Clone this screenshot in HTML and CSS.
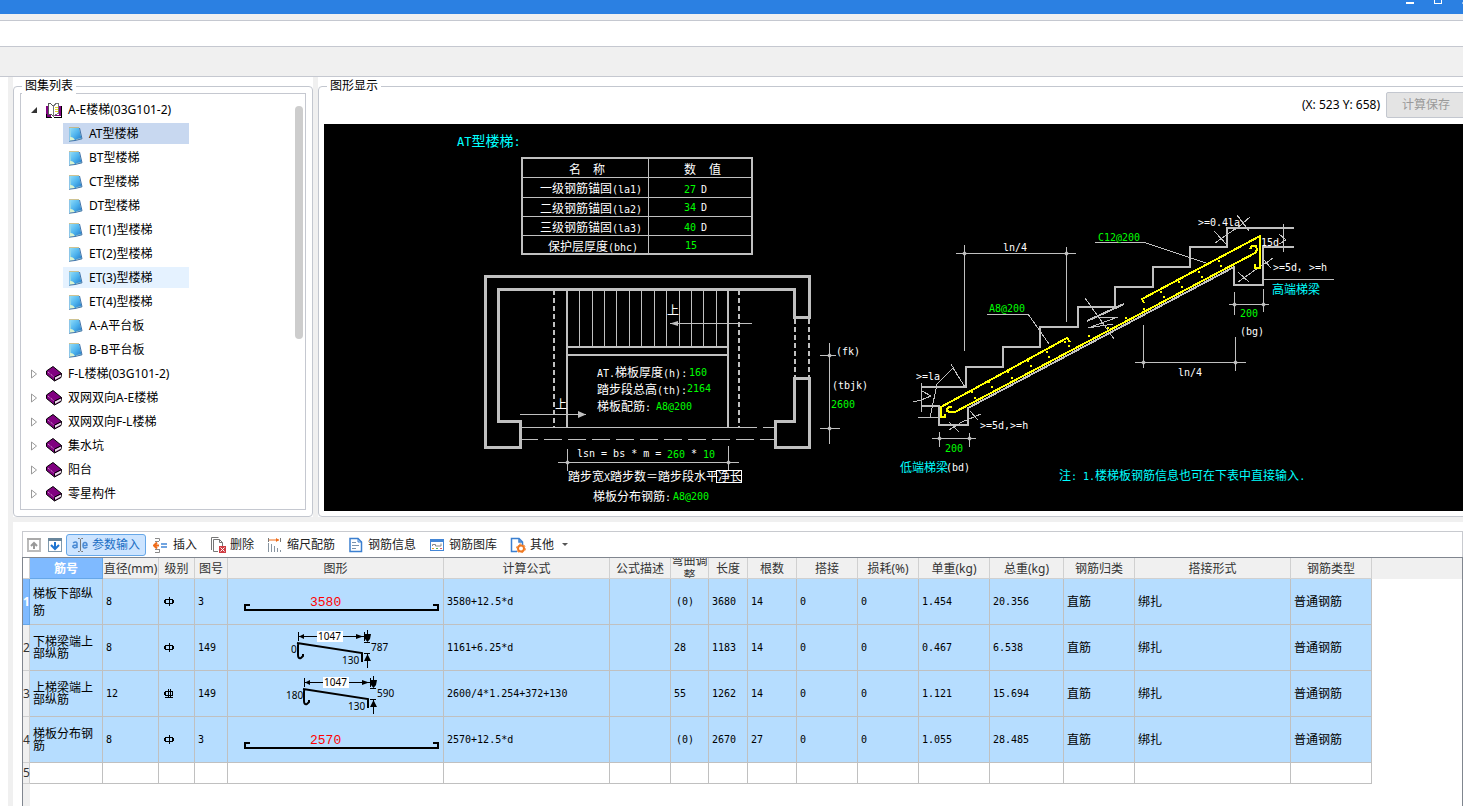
FILE: index.html
```html
<!DOCTYPE html>
<html lang="zh-CN">
<head>
<meta charset="utf-8">
<title>楼梯参数输入</title>
<link rel="stylesheet" href="styles.css">
</head>
<body>
<svg class="defs" aria-hidden="true">
  <defs>
    <linearGradient id="pageBlue" x1="0" y1="0" x2="1" y2="1">
      <stop offset="0" stop-color="#8fdcf8"/><stop offset=".5" stop-color="#4fb4ee"/><stop offset="1" stop-color="#1f78c8"/>
    </linearGradient>
    <symbol id="note" viewBox="0 0 16 16">
      <path d="M1 1.500H11L14 13L10 14L1 15.500Z" fill="#d9f3d0"/>
      <path d="M2 2H11L13.500 12.500Q9 12 7 14.500Q6 11 2.500 11Z" fill="url(#pageBlue)"/>
      <path d="M1 15.200L7 14.500L14 12.800L11.500 2" fill="none" stroke="#3f72ac"/>
      <path d="M1.500 1.500H11.500" stroke="#b08d3c" stroke-dasharray="1 1"/>
      <path d="M1.500 2V15" stroke="#8cc6e8"/>
    </symbol>
    <symbol id="book" viewBox="0 0 16 16">
      <path d="M7 .5L15.500 7.500L15 11.500L8.500 15L.5 8.500V5Z" fill="#800080" stroke="#000"/>
      <path d="M9 11.500L15 8.500V10.500L9 13.800Z" fill="#e8e8e8"/>
      <path d="M8.500 11L15.500 7.500M8.500 14.500V11.500" stroke="#000"/>
      <path d="M2 6L8 11" stroke="#e6b8e6" stroke-dasharray="1 1"/>
    </symbol>
    <symbol id="open" viewBox="0 0 16 16" shape-rendering="crispEdges">
      <path d="M0 4H2V12H5V15H0ZM6 13H13V4H15V14H6Z" fill="#800080"/>
      <path d="M2.500 12V2L4 1L7 4V14L4.500 12Z" fill="#fff" stroke="#555"/>
      <path d="M7.500 14V4L10 1.500H12.500V11.500L9.500 12.500Z" fill="#fff" stroke="#777"/>
      <path d="M9 5H12M9 7H12M9 9H12" stroke="#e8d820" stroke-width="1"/>
      <path d="M0 12V15H5V16H8V15H15V4" fill="none" stroke="#000"/>
    </symbol>
    <symbol id="closed" viewBox="0 0 6 10"><path d="M.5 1V9L5.500 5Z" fill="#fff" stroke="#999"/></symbol>
    <symbol id="expanded" viewBox="0 0 6 10"><path d="M0 8H6V2Z" fill="#333"/></symbol>
    <symbol id="grade1" viewBox="0 0 10 10" shape-rendering="crispEdges"><path d="M1.500 2.500H8.500V6.500H1.500ZM5 0V9" fill="none" stroke="#000"/><path d="M.5 3V6M9.500 3V6" stroke="#000"/></symbol>
    <symbol id="grade2" viewBox="0 0 10 10" shape-rendering="crispEdges"><path d="M1.500 2.500H8.500V6.500H1.500ZM4.500 0V9M6.500 0V9M1 8.500H9M.5 3V6" fill="none" stroke="#000"/></symbol>
    <symbol id="bar" viewBox="0 0 215 45">
      <path d="M22 26H17V31H210V26H205" fill="none" stroke="#000" stroke-width="2" shape-rendering="crispEdges"/>
    </symbol>
    <symbol id="bent" viewBox="0 0 215 45">
      <path d="M72 18V30Q72 34 75 33L77 31V29M71 18L136 28V37" transform="translate(-2 0)" fill="none" stroke="#000" stroke-width="2"/>
      <g stroke="#000" fill="none" shape-rendering="crispEdges">
        <path d="M70.500 7V16M70 11.500H139M136.500 7V16M139.500 5V16M136 17.500H142M136 28.500H142M139.500 29V43"/>
      </g>
      <path d="M71 11.500L76 9V14ZM135 11.500L128 9V14ZM137 9H143L142 14L139.500 17L137 14ZM139.500 29L143 36H136Z"/>
      <rect x="89" y="6" width="26" height="11" fill="#fff"/>
    </symbol>
  </defs>
</svg>

<header class="titlebar">
  <button class="win" aria-label="最小化"><svg width="8" height="10"><path d="M0 9H8" stroke="#fff" stroke-width="2"/></svg></button>
  <button class="win" aria-label="最大化"><svg width="8" height="10"><rect x=".5" y="2.500" width="7" height="7" fill="none" stroke="#fff"/></svg></button>
  <button class="win" aria-label="关闭"><svg width="8" height="10"><path d="M0 9.500L8 2M0 2L8 9.500" stroke="#fff"/></svg></button>
</header>
<div class="strip"></div>
<div class="band"></div>
<div class="ribbon"></div>

<main class="work">
  <div class="upper">
    <div class="pane">
      <section class="group">
        <h2 class="caption">图集列表</h2>
        <div class="treebox">
          <ul class="tree">
            <li><button class="node"><svg class="twisty"><use href="#expanded"/></svg><svg class="ico"><use href="#open"/></svg>A-E楼梯(03G101-2)</button></li>
            <li><button class="leaf selected"><svg class="ico"><use href="#note"/></svg>AT型楼梯</button></li>
            <li><button class="leaf"><svg class="ico"><use href="#note"/></svg>BT型楼梯</button></li>
            <li><button class="leaf"><svg class="ico"><use href="#note"/></svg>CT型楼梯</button></li>
            <li><button class="leaf"><svg class="ico"><use href="#note"/></svg>DT型楼梯</button></li>
            <li><button class="leaf"><svg class="ico"><use href="#note"/></svg>ET(1)型楼梯</button></li>
            <li><button class="leaf"><svg class="ico"><use href="#note"/></svg>ET(2)型楼梯</button></li>
            <li><button class="leaf hover"><svg class="ico"><use href="#note"/></svg>ET(3)型楼梯</button></li>
            <li><button class="leaf"><svg class="ico"><use href="#note"/></svg>ET(4)型楼梯</button></li>
            <li><button class="leaf"><svg class="ico"><use href="#note"/></svg>A-A平台板</button></li>
            <li><button class="leaf"><svg class="ico"><use href="#note"/></svg>B-B平台板</button></li>
            <li><button class="node"><svg class="twisty"><use href="#closed"/></svg><svg class="ico"><use href="#book"/></svg>F-L楼梯(03G101-2)</button></li>
            <li><button class="node"><svg class="twisty"><use href="#closed"/></svg><svg class="ico"><use href="#book"/></svg>双网双向A-E楼梯</button></li>
            <li><button class="node"><svg class="twisty"><use href="#closed"/></svg><svg class="ico"><use href="#book"/></svg>双网双向F-L楼梯</button></li>
            <li><button class="node"><svg class="twisty"><use href="#closed"/></svg><svg class="ico"><use href="#book"/></svg>集水坑</button></li>
            <li><button class="node"><svg class="twisty"><use href="#closed"/></svg><svg class="ico"><use href="#book"/></svg>阳台</button></li>
            <li><button class="node"><svg class="twisty"><use href="#closed"/></svg><svg class="ico"><use href="#book"/></svg>零星构件</button></li>
          </ul>
          <div class="thumb"></div>
        </div>
      </section>
    </div>

    <div class="pane wide">
      <section class="group">
        <h2 class="caption">图形显示</h2>
        <div class="viewhead">
          <span>(X: 523 Y: 658)</span>
          <button class="save" disabled>计算保存</button>
        </div>
        <svg class="cad" viewBox="324 124 1142 387" role="img" aria-label="AT型楼梯">
          <g class="ln" shape-rendering="crispEdges">
            <!-- parameter table -->
            <path class="w2" d="M522 158H752V254H522Z"/>
            <path d="M648.500 158V254M522 177.500H752M522 197.500H752M522 216.500H752M522 235.500H752"/>
            <!-- plan walls -->
            <path class="w3" d="M794.500 317.500V289.500H498.500V421.500H520.500V447.500H485.500V276.500H809.500V317.500H793"/>
            <path class="w3" d="M794.500 377V421.500H775.500V447.500H809.500V378.500H793"/>
            <path class="w2" stroke-dasharray="5 3" d="M554 290V427M739 290V427M795 319V377M809 319V377"/>
            <path class="w2" d="M567 290V427M728 290V427M567 347H728M567 355H728"/>
            <path d="M579.500 290V346M592.500 290V346M604.500 290V346M616.500 290V346M629.500 290V346M641.500 290V346M654.500 290V346M666.500 290V346M679.500 290V346M691.500 290V346M703.500 290V346M716.500 290V346"/>
            <path d="M752 323.500H670M520 414.500H586M522 427.500H757M763 427.500H774"/>
            <path stroke-dasharray="18 6" d="M520 439.500H774"/>
            <path d="M567.500 449V471M728.500 446V471M558 462.500H739M829.500 343V444M820 355.500H836M820 428.500H840"/>
            <!-- section dimensions -->
            <path d="M956 253.500H1076M964.500 245V351M1066.500 247V322M987 314.500H1028M1095 242.500H1143M921.500 383V412M918 417.500H939"/>
            <path d="M932 438.500H976M939.500 432V447M969.500 433V447M1229 304.500H1269M1234.500 292V315M1263.500 289V312M1263 279.500H1334M1135 362.500H1246M1143.500 325V368M1235.500 337V371M1283.500 224V252"/>
            <!-- stair outline -->
            <path class="w2" d="M922 387H966V367H1003V347H1040V327H1078V307H1115V287H1153V267H1190V247H1227V228H1294M1294 247H1263V285H1234V267L968 408V425H939V406H922"/>
            <path class="w2" d="M1087 321L1124 304"/>
            <path d="M1028 314L1049 344M1143 242L1206 263M1085 298L1114 339M1098 317L1118 317L1088 328L1113 324"/>
            <path d="M922 391L931 396L921 400L913 402M930 418L937 384L953 368L965 387M951 364L957 374M949 422L959 432M949 430L962 422L981 414M970 411L978 420"/>
            <path d="M1237 215L1249 231M1235 230L1250 217M1214 231L1228 246M1215 243L1235 229M1279 234L1286 240L1279 244M1263 259L1271 268M1265 264L1273 258M1238 272L1249 282M1238 282L1265 263"/>
          </g>
          <path class="solid" d="M670 323.500L678 321V326ZM586 414.500L578 411V418ZM565 462.500L567.500 460L570 462.500L567.500 465ZM726 462.500L728.500 460L731 462.500L728.500 465Z"/>
          <path class="solid" d="M827 355.500L829.500 353L832 355.500L829.500 358ZM827 428.500L829.500 426L832 428.500L829.500 431ZM962 253.500L964.500 251L967 253.500L964.500 256ZM1064 253.500L1066.500 251L1069 253.500L1066.500 256ZM937 438.500L939.500 436L942 438.500L939.500 441ZM967 438.500L969.500 436L972 438.500L969.500 441ZM1232 304.500L1234.500 302L1237 304.500L1234.500 307ZM1261 304.500L1263.500 302L1266 304.500L1263.500 307ZM1141 362.500L1143.500 360L1146 362.500L1143.500 365ZM1233 362.500L1235.500 360L1238 362.500L1235.500 365Z"/>
          <g class="rebar" shape-rendering="crispEdges">
            <path d="M945 414V417H941V407L1067 338L1070 342"/>
            <path d="M952 407H949L947 409V411L950 412H955L1255 253L1257 250L1256 246H1252L1250 249"/>
            <path d="M1144 303L1142 299L1260 236V268H1255V264"/>
            <path class="dots" d="M972 392h0M975 398h0M989 382h0M992 387h0M1008 372h0M1012 378h0M1028 361h0M1031 366h0M1047 352h0M1049 357h0M1065 342h0M1069 346h0M1089 336h0M1108 328h0M1126 318h0M1144 309h0M1161 292h0M1164 297h0M1179 282h0M1182 287h0M1199 272h0M1202 277h0M1219 261h0M1221 266h0"/>
          </g>
          <rect x="716.500" y="470.500" width="25" height="12" fill="none" stroke="#fff"/>
          <g class="cy">
            <text x="457" y="146" class="t14"><tspan class="l12">AT</tspan>型楼梯<tspan class="l12">:</tspan></text>
            <text x="1272" y="294" class="c">高端梯梁</text>
            <text x="900" y="472" class="c">低端梯梁</text>
            <text x="1059" y="480" class="c">注<tspan class="l">: 1.</tspan>楼梯板钢筋信息也可在下表中直接输入<tspan class="l">.</tspan></text>
          </g>
          <g class="wh">
            <text y="174" class="c"><tspan x="569">名</tspan><tspan x="593">称</tspan></text>
            <text y="174" class="c"><tspan x="684">数</tspan><tspan x="709">值</tspan></text>
            <text x="540" y="193" class="c">一级钢筋锚固<tspan class="l">(la1)</tspan></text>
            <text x="540" y="213" class="c">二级钢筋锚固<tspan class="l">(la2)</tspan></text>
            <text x="540" y="232" class="c">三级钢筋锚固<tspan class="l">(la3)</tspan></text>
            <text x="548" y="251" class="c">保护层厚度<tspan class="l">(bhc)</tspan></text>
            <text x="701" y="193">D</text><text x="701" y="211">D</text><text x="701" y="231">D</text>
            <text x="667" y="315" class="c">上</text><text x="555" y="409" class="c">上</text>
            <text x="597" y="377" class="c"><tspan class="l">AT.</tspan>梯板厚度<tspan class="l">(h):</tspan></text>
            <text x="597" y="394" class="c">踏步段总高<tspan class="l">(th):</tspan></text>
            <text x="597" y="411" class="c">梯板配筋<tspan class="l">:</tspan></text>
            <text x="577" y="457">lsn = bs * m =</text><text x="691" y="457">*</text>
            <text x="568" y="481" class="c">踏步宽<tspan class="l">X</tspan>踏步数＝踏步段水平净长</text>
            <text x="593" y="501" class="c">梯板分布钢筋<tspan class="l">:</tspan></text>
            <text x="836" y="355">(fk)</text><text x="832" y="389">(tbjk)</text>
            <text x="1003" y="251">ln/4</text><text x="1178" y="376">ln/4</text>
            <text x="916" y="380">&gt;=la</text><text x="980" y="429">&gt;=5d,&gt;=h</text>
            <text x="946" y="471">(bd)</text><text x="1240" y="335">(bg)</text>
            <text x="1198" y="226">&gt;=0.4la</text><text x="1261" y="246">15d</text>
            <text x="1273" y="271">&gt;=5d，</text><text x="1309" y="271">&gt;=h</text>
          </g>
          <g class="gr">
            <text x="684" y="193">27</text><text x="684" y="211">34</text><text x="684" y="231">40</text><text x="685" y="249">15</text>
            <text x="689" y="376">160</text><text x="687" y="392">2164</text><text x="656" y="410">A8@200</text>
            <text x="667" y="458">260</text><text x="703" y="458">10</text><text x="673" y="500">A8@200</text>
            <text x="831" y="408">2600</text><text x="989" y="312">A8@200</text><text x="1098" y="241">C12@200</text>
            <text x="945" y="452">200</text><text x="1240" y="317">200</text>
          </g>
        </svg>
      </section>
    </div>
  </div>

  <div class="lower">
    <nav class="toolbar">
      <button class="tool" aria-label="上移"><svg width="14" height="14"><rect x="1" y="1" width="12" height="12" fill="#fff" stroke="#bbb" stroke-width="2"/><path d="M0 1H14" stroke="#aaa" stroke-width="2"/><path d="M7 11V5M4 8L7 5L10 8" fill="none" stroke="#999" stroke-width="2"/></svg></button>
      <button class="tool" aria-label="下移"><svg width="14" height="14"><rect x=".5" y=".5" width="13" height="13" fill="#fff" stroke="#7f99ad"/><path d="M0 1.500H14" stroke="#68869c" stroke-width="3"/><path d="M7 4V11M3 7L7 11L11 7" fill="none" stroke="#1f74d0" stroke-width="2"/></svg></button>
      <button class="tool action active"><svg width="16" height="16" fill="none" stroke="#4a8ad4"><path d="M1 6Q4 4 5 6V11M5 8Q0 8 1 10Q3 12 5 9.500M11 8.500H15Q15 5.500 13 5.500T11 8.500T13 11T15 10" stroke-width="1.500"/><path d="M6 1.500H7.500L8.500 2.500L9.500 1.500H11M8.500 2.500V13.500M6 14.500H7.500L8.500 13.500L9.500 14.500H11" stroke="#777"/></svg>参数输入</button>
      <button class="tool action"><svg width="16" height="16" fill="none"><path d="M2 1.500H6.500V4M2 15.500H6.500V12" stroke="#8a8a8a"/><path d="M2 4.500H6M2 12.500H6" stroke="#8a8a8a"/><path d="M6 8.500H1M4 5.500L1 8.500L4 11.500" stroke="#ef6c1a" stroke-width="2"/><path d="M8 7H14M8 10H14" stroke="#4386d6" stroke-width="1.500"/></svg>插入</button>
      <button class="tool action"><svg width="16" height="16"><path d="M1.500 13V.5H8.500M3.500 14.500V2.500H9.500L12.500 5.500V9M9.500 2.500V5.500H12.500M3.500 14.500H8" fill="none" stroke="#777"/><rect x="9" y="9" width="7" height="7" fill="#cf3d43"/><path d="M10.500 10.500L14.500 14.500M14.500 10.500L10.500 14.500" stroke="#fff"/></svg>删除</button>
      <button class="tool action"><svg width="16" height="16" fill="none"><path d="M1.500 6V15M4.500 7V15M7.500 9V15M10.500 11V15M13.500 13V15" stroke="#8794a0"/><path d="M13.500 1V5M1.500 1V5" stroke="#777"/><path d="M2 3H12" stroke="#ef6c1a"/><path d="M9 1L12 3L9 5Z" fill="#ef6c1a"/></svg>缩尺配筋</button>
      <button class="tool action"><svg width="16" height="16" fill="none" stroke="#3b7fd0"><path d="M2 1.500H10L13.500 5V14.500H2Z" fill="#fff" stroke-width="1.500"/><path d="M10 1.500V5H13.500"/><path d="M4 5.500H8M4 8.500H11M4 11.500H8" stroke="#7b93ad"/></svg>钢筋信息</button>
      <button class="tool action"><svg width="16" height="16" fill="none"><rect x="1.500" y="2.500" width="13" height="11" fill="#fff" stroke="#4386d6"/><path d="M1 3.500H15" stroke="#4386d6" stroke-width="3"/><path d="M3.500 9V7.500H6.500V9H12V6.500" stroke="#888"/><path d="M3 11.500H5" stroke="#e5a02d"/><path d="M7 11.500H9" stroke="#50b65a"/><path d="M11 11.500H13" stroke="#df5d5d"/></svg>钢筋图库</button>
      <button class="tool action"><svg width="16" height="16" fill="none"><path d="M7 14.500H1.500V1.500H9L12.500 5V8M9 1.500V5H12.500" fill="#fff" stroke="#3b7fd0" stroke-width="1.500"/><circle cx="11" cy="11.500" r="3" fill="#fff" stroke="#ef7922" stroke-width="2"/><circle cx="11" cy="11.500" r="4.500" stroke="#ef7922" stroke-dasharray="2 2.700"/></svg>其他<svg class="caret" width="6" height="4"><path d="M0 0H6L3 3Z" fill="#555"/></svg></button>
    </nav>

    <div class="sheet">
      <table class="grid">
        <colgroup><col class="w7"><col class="w73"><col class="w56"><col class="w36"><col class="w33"><col class="w216"><col class="w166"><col class="w61"><col class="w38"><col class="w39"><col class="w49"><col class="w61"><col class="w61"><col class="w71"><col class="w74"><col class="w71"><col class="w156"><col class="w81"></colgroup>
        <thead><tr><th class="corner"></th><th class="on">筋号</th><th>直径(mm)</th><th>级别</th><th>图号</th><th>图形</th><th>计算公式</th><th>公式描述</th><th><div class="clip">弯曲调整</div></th><th>长度</th><th>根数</th><th>搭接</th><th>损耗(%)</th><th>单重(kg)</th><th>总重(kg)</th><th>钢筋归类</th><th>搭接形式</th><th>钢筋类型</th></tr></thead>
        <tbody>
          <tr><th class="on">1</th><td class="cjk loose">梯板下部纵筋</td><td>8</td><td class="mark"><svg class="grade" role="img" aria-label="一级"><use href="#grade1"/></svg></td><td>3</td><td class="shape"><svg class="sk" viewBox="0 0 215 45"><use href="#bar"/><text class="red" x="82" y="27">3580</text></svg></td><td>3580+12.5*d</td><td></td><td class="adj">(0)</td><td>3680</td><td>14</td><td>0</td><td>0</td><td>1.454</td><td>20.356</td><td class="cjk">直筋</td><td class="cjk">绑扎</td><td class="cjk">普通钢筋</td></tr>
          <tr><th>2</th><td class="cjk">下梯梁端上部纵筋</td><td>8</td><td class="mark"><svg class="grade" role="img" aria-label="一级"><use href="#grade1"/></svg></td><td>149</td><td class="shape"><svg class="sk" viewBox="0 0 215 45"><use href="#bent"/><text x="90" y="15">1047</text><text x="143" y="26">787</text><text x="114" y="39">130</text><text x="63" y="28">0</text></svg></td><td>1161+6.25*d</td><td></td><td>28</td><td>1183</td><td>14</td><td>0</td><td>0</td><td>0.467</td><td>6.538</td><td class="cjk">直筋</td><td class="cjk">绑扎</td><td class="cjk">普通钢筋</td></tr>
          <tr><th>3</th><td class="cjk">上梯梁端上部纵筋</td><td>12</td><td class="mark"><svg class="grade" role="img" aria-label="二级"><use href="#grade2"/></svg></td><td>149</td><td class="shape"><svg class="sk" viewBox="0 0 215 45"><use href="#bent" x="6"/><text x="96" y="15">1047</text><text x="149" y="26">590</text><text x="120" y="39">130</text><text x="58" y="28">180</text></svg></td><td>2600/4*1.254+372+130</td><td></td><td>55</td><td>1262</td><td>14</td><td>0</td><td>0</td><td>1.121</td><td>15.694</td><td class="cjk">直筋</td><td class="cjk">绑扎</td><td class="cjk">普通钢筋</td></tr>
          <tr><th>4</th><td class="cjk">梯板分布钢筋</td><td>8</td><td class="mark"><svg class="grade" role="img" aria-label="一级"><use href="#grade1"/></svg></td><td>3</td><td class="shape"><svg class="sk" viewBox="0 0 215 45"><use href="#bar"/><text class="red" x="82" y="27">2570</text></svg></td><td>2570+12.5*d</td><td></td><td class="adj">(0)</td><td>2670</td><td>27</td><td>0</td><td>0</td><td>1.055</td><td>28.485</td><td class="cjk">直筋</td><td class="cjk">绑扎</td><td class="cjk">普通钢筋</td></tr>
          <tr class="blank"><th>5</th><td></td><td></td><td></td><td></td><td></td><td></td><td></td><td></td><td></td><td></td><td></td><td></td><td></td><td></td><td></td><td></td><td></td></tr>
        </tbody>
      </table>
    </div>
  </div>
</main>
</body>
</html>
```
FILE: styles.css
```css
* { box-sizing: border-box; }

body {
  margin: 0;
  height: 100vh;
  display: flex;
  flex-direction: column;
  overflow: hidden;
  background: #fff;
  color: #000;
  font: 12px/16px "Noto Sans", "Noto Sans CJK SC", sans-serif;
}

button {
  font: inherit;
  color: inherit;
  background: none;
  border: 0;
  padding: 0;
  white-space: nowrap;
}

svg { display: block; flex: none; }
.defs { position: absolute; width: 0; height: 0; }

/* window frame */
.titlebar {
  flex: none;
  height: 14px;
  display: flex;
  justify-content: flex-end;
  align-items: flex-start;
  margin-right: -17px;
  background: #2b80e2;
}
.win { width: 28px; height: 10px; display: flex; justify-content: center; overflow: hidden; margin-top: -6px; }
.strip { flex: none; height: 6px; background: #f0f0f0; }
.band { flex: none; height: 27px; border: solid #c5c8d0; border-width: 1px 0; }
.ribbon { flex: none; height: 30px; background: #f0f0f0; border-bottom: 1px solid #c5c8d0; }

.work {
  flex: 1;
  display: flex;
  flex-direction: column;
  gap: 5px;
  margin-left: 8px;
  padding-left: 5px;
  background: #f0f0f0;
}

/* upper panes */
.upper { display: grid; grid-template-columns: 300px 1fr; gap: 5px; margin-right: -9px; }
.pane { display: flex; background: #fff; padding-top: 9px; min-width: 0; }
.group {
  position: relative;
  flex: 1;
  display: flex;
  flex-direction: column;
  min-width: 0;
  border: 1px solid #c3c7cf;
  border-radius: 4px;
  padding: 6px;
}
.wide .group { padding: 5px; }
.caption {
  position: absolute;
  top: -9px;
  left: 8px;
  margin: 0;
  padding: 0 3px;
  background: #fff;
  font: inherit;
}
.treebox { flex: 1; display: flex; border: 1px solid #c5c8d0; }
.tree { flex: 1; list-style: none; margin: 0; padding: 4px 0 0; }
.tree li { height: 24px; padding-top: 1px; }
.node, .leaf { display: flex; align-items: center; height: 21px; }
.node { padding-left: 10px; gap: 6px; }
.node .twisty { margin-right: 3px; }
.leaf { width: 126px; margin-left: 42px; padding-left: 5px; gap: 5px; }
.twisty { width: 6px; height: 10px; }
.ico { width: 16px; height: 16px; }
.selected { background: #c8d8f0; }
.hover { background: #e5f2ff; }
.thumb { width: 8px; height: 233px; margin: 12px 2px 0 0; border-radius: 4px; background: #cdcdcd; }

.viewhead { display: flex; justify-content: flex-end; align-items: center; gap: 6px; height: 26px; margin-bottom: 6px; }
.save {
  width: 80px;
  height: 26px;
  border: 1px solid #c3c7cf;
  border-radius: 2px;
  background: #e4e4e4;
  color: #9a9a9a;
}

/* drawing */
.cad { width: 100%; background: #000; font: 10px "DejaVu Sans Mono", "Noto Sans CJK SC", monospace; }
.ln { fill: none; stroke: #c0c0c0; }
.w2 { stroke-width: 2; }
.w3 { stroke-width: 3; }
.solid { fill: #c0c0c0; }
.rebar { fill: none; stroke: #ff0; stroke-width: 2; }
.dots { stroke-width: 3; stroke-linecap: round; }
.cy { fill: #0ff; }
.wh { fill: #fff; }
.gr { fill: #0f0; }
.c { font-size: 12px; font-family: "Noto Sans CJK SC", sans-serif; }
.t14 { font-size: 14px; font-family: "Noto Sans CJK SC", sans-serif; }
.l { font: 10px "DejaVu Sans Mono", monospace; }
.l12 { font: 12px "DejaVu Sans Mono", monospace; }

/* lower pane */
.lower { flex: 1; display: flex; flex-direction: column; background: #fff; padding: 9px 0 0 9px; min-height: 0; }
.toolbar {
  display: flex;
  align-items: center;
  gap: 1px;
  height: 26px;
  border: 1px solid #c8cacf;
  border-bottom: 0;
  padding-left: 1px;
  color: #222;
}
.tool { display: flex; align-items: center; height: 22px; padding: 0 2px; border: 1px solid transparent; border-radius: 3px; }
.action { padding: 0 5px; gap: 4px; }
.active { background: #cce4ff; border-color: #66a7e8; color: #1c6fc4; }
.caret { margin-left: 4px; }

.sheet {
  flex: 1;
  border: 1px solid #80868f;
  border-bottom: 0;
  background:
    linear-gradient(#f0f0f0, #f0f0f0) 0 0 / 100% 21px no-repeat,
    linear-gradient(#f0f0f0, #f0f0f0) 0 0 / 7px 100% no-repeat,
    #fff;
}
.grid { width: 1349px; table-layout: fixed; border-collapse: separate; border-spacing: 0; }
.grid th, .grid td { padding: 0; border: solid #c0c0c0; border-width: 0 1px 1px 0; }
.grid th { height: 21px; background: #f0f0f0; color: #333; font-weight: 400; line-height: 16px; white-space: nowrap; border-color: #d0d0d0; }
.grid thead th { padding-top: 2px; }
.grid thead th:has(.clip) { padding-top: 0; }
.grid td { height: 46px; padding: 0 3px; background: #b6ddff; font: 10px/12px "DejaVu Sans Mono", monospace; }
.grid .corner { background: #fff; }
.grid .on { background: #7fbaff; color: #fff; font-weight: 700; border-color: #66a7e8; }
.grid .cjk { padding-bottom: 2px; font: 12px/12px "Noto Sans CJK SC", sans-serif; }
.grid .loose { line-height: 17px; }
.grid .adj { padding-left: 5px; }
.grid .mark { padding-left: 5px; }
.grid .shape { padding: 0; }
.grid .blank td { height: 21px; background: #fff; }
.clip { height: 20px; display: flex; align-items: center; justify-content: center; overflow: hidden; white-space: normal; line-height: 15px; }
.grade { width: 10px; height: 10px; }
.sk { width: 100%; font: 10px "Noto Sans", sans-serif; }
.red { fill: #f00; font: 13px "Liberation Mono", monospace; }

.w7 { width: 7px; }
.w33 { width: 33px; }
.w36 { width: 36px; }
.w38 { width: 38px; }
.w39 { width: 39px; }
.w49 { width: 49px; }
.w56 { width: 56px; }
.w61 { width: 61px; }
.w71 { width: 71px; }
.w73 { width: 73px; }
.w74 { width: 74px; }
.w81 { width: 81px; }
.w156 { width: 156px; }
.w166 { width: 166px; }
.w216 { width: 216px; }
```
